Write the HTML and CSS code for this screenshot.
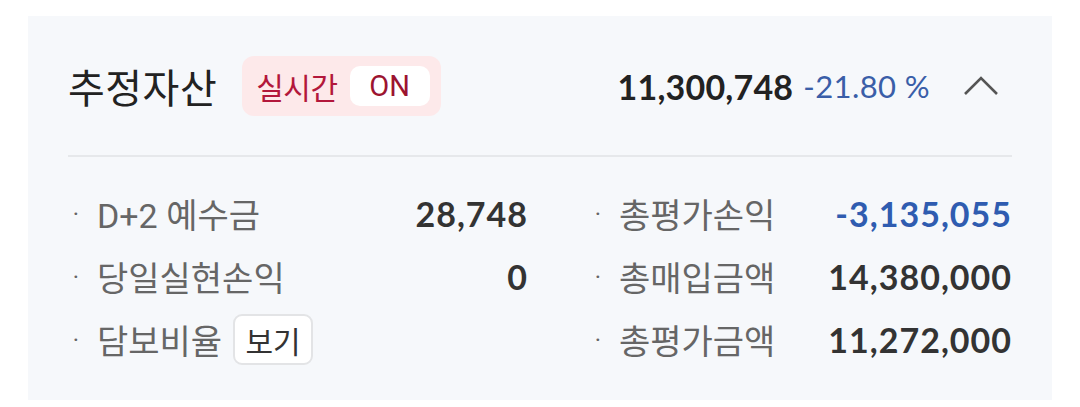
FILE: index.html
```html
<!DOCTYPE html>
<html lang="ko">
<head>
    <meta charset="UTF-8">
    <meta name="viewport" content="width=device-width, initial-scale=1.0">
    <title>추정자산</title>
    <link rel="stylesheet" href="styles.css">
</head>
<body>
    <div class="card">
        <div class="head">
            <span class="title">추정자산</span>
            <span class="live">
                <span class="live-name">실시간</span>
                <span class="live-on">ON</span>
            </span>
            <span class="total">11,300,748</span>
            <span class="rate">-21.80 %</span>
            <span class="fold">
                <svg width="36" height="20" viewBox="0 0 36 20">
                    <polyline points="2,18 18,2 34,18" fill="none" stroke="#555" stroke-width="2.6"/>
                </svg>
            </span>
        </div>
        <div class="rows">
            <div class="row">
                <span class="label"><i>·</i>D+2 예수금</span>
                <span class="val">28,748</span>
            </div>
            <div class="row">
                <span class="label"><i>·</i>총평가손익</span>
                <span class="val minus">-3,135,055</span>
            </div>
            <div class="row">
                <span class="label"><i>·</i>당일실현손익</span>
                <span class="val">0</span>
            </div>
            <div class="row">
                <span class="label"><i>·</i>총매입금액</span>
                <span class="val">14,380,000</span>
            </div>
            <div class="row">
                <span class="label"><i>·</i>담보비율 <span class="see">보기</span></span>
                <span class="val"></span>
            </div>
            <div class="row">
                <span class="label"><i>·</i>총평가금액</span>
                <span class="val">11,272,000</span>
            </div>
        </div>
    </div>
</body>
</html>
```

FILE: styles.css
```css
body{
    margin: 0;
    background: #ffffff;
    font-family: Roboto, "Noto Sans CJK KR", sans-serif;
}
.card{
    margin: 16px 28px 0 28px;
    background: #f6f8fb;
    padding: 0 40px 26px 40px;
    height: 384px;
    box-sizing: border-box;
}
.head{
    display: flex;
    align-items: center;
    padding: 40px 0 39px 0;
    border-bottom: 2px solid #e6e8eb;
}
.title{
    font-size: 40px;
    color: #222;
    margin-right: 25px;
    letter-spacing: 0.5px;
}
.live{
    display: flex;
    align-items: center;
    height: 60px;
    box-sizing: border-box;
    padding: 0 11px 0 14px;
    background: #fde9ea;
    border-radius: 12px;
}
.live-name{
    font-size: 30px;
    color: #b3173b;
    margin-right: 12px;
    letter-spacing: -0.5px;
}
.live-on{
    display: flex;
    align-items: center;
    justify-content: center;
    width: 80px;
    height: 40px;
    background: #fff;
    border-radius: 10px;
    font-size: 29px;
    color: #9c1430;
}
.total{
    margin-left: auto;
    font-family: Lato, sans-serif;
    font-weight: bold;
    font-size: 34px;
    letter-spacing: 0.2px;
    color: #222;
}
.rate{
    font-family: Lato, sans-serif;
    font-size: 31px;
    letter-spacing: 0.4px;
    color: #3a5ea8;
    margin-left: 10px;
}
.fold{
    display: flex;
    margin-left: 33px;
    margin-right: 13px;
}
.rows{
    display: grid;
    grid-template-columns: 460px 1fr;
    column-gap: 62px;
    padding-top: 25px;
}
.row{
    display: flex;
    align-items: center;
    justify-content: space-between;
    height: 63px;
}
.label{
    display: flex;
    align-items: center;
    font-size: 34px;
    letter-spacing: 0;
    color: #666;
}
.label i{
    font-style: normal;
    font-size: 24px;
    width: 16px;
    margin-right: 13px;
    text-align: center;
}
.val{
    font-family: Lato, sans-serif;
    font-weight: bold;
    font-size: 34px;
    letter-spacing: 1px;
    color: #333;
}
.val.minus{
    color: #2f5cb0;
}
.see{
    display: flex;
    align-items: center;
    justify-content: center;
    width: 80px;
    height: 51px;
    box-sizing: border-box;
    margin-left: 11px;
    border: 2px solid #e3e4e6;
    border-radius: 9px;
    background: #fff;
    font-size: 30px;
    color: #333;
}
```
